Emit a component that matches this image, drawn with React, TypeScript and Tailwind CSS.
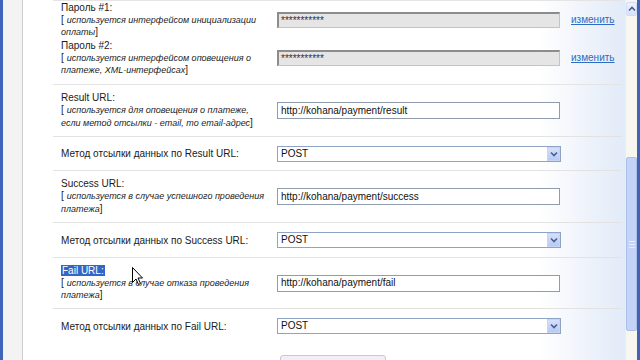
import React from "react";

const Hint = ({ lines }: { lines: string[] }) => (
  <div className="text-[9px] leading-[12.5px] text-[#1c1c1c]">
    {lines.map((l, i) => (
      <div key={i} className="whitespace-nowrap">
        {i === 0 && <span className="not-italic mr-[3px] text-[10px]">[</span>}
        <span className="italic">{l}</span>
        {i === lines.length - 1 && <span className="not-italic text-[10px]">]</span>}
      </div>
    ))}
  </div>
);

const PwInput = () => (
  <div className="w-[283px] h-[16px] bg-[#e5e5e5] border border-[#c4c4c4] border-t-2 border-l-2 border-t-[#8c8c8c] border-l-[#8c8c8c] flex items-center pl-[2px] text-[10px] leading-none text-[#333]">
    ***********
  </div>
);

const UrlInput = ({ value }: { value: string }) => (
  <div className="w-[283px] h-[17px] bg-white border border-[#8e9cae] flex items-center pl-[3px] text-[10px] text-[#111] leading-none">
    {value}
  </div>
);

const Select = () => (
  <div className="w-[284px] h-[16px] bg-white border border-[#8fa4c4] flex items-center justify-between pl-[3px] text-[10px] text-[#111] leading-none">
    <span>POST</span>
    <div className="w-[13px] h-[14px] bg-[linear-gradient(180deg,#d4e0fc,#b8cbf5)] border border-[#c7d5f5] flex items-center justify-center">
      <svg width="8" height="6" viewBox="0 0 8 6">
        <path d="M1 1.5 L4 4.5 L7 1.5" fill="none" stroke="#4a5f8c" strokeWidth="1.6" />
      </svg>
    </div>
  </div>
);

const Link = () => (
  <a className="ml-[11px] text-[10px] text-[#2d6cc3] underline leading-none">изменить</a>
);

export default function App() {
  return (
    <div className="w-[640px] h-[360px] overflow-hidden flex bg-white relative font-['Liberation_Sans',Arial,sans-serif] text-[10px] text-[#1a1a1a]">
      <div className="w-[3px] shrink-0 bg-[#3f63b6]" />
      <div className="w-[20px] shrink-0 bg-[#f3f3f3] border-r border-[#cdcdcd]" />
      <div className="flex-1 flex bg-[linear-gradient(90deg,#ffffff_0%,#ffffff_84%,#dde7f6_100%)]">
        <div className="flex-1 pl-[30px] pr-[3px] flex flex-col">
          {/* password group */}
          <div className="shrink-0 border-t border-[#e4e4e4] border-b h-[85px] flex flex-col">
            <div className="h-[38px] shrink-0 flex items-center">
              <div className="w-[224px] pl-[8px]">
                <div className="leading-[12px]">Пароль #1:</div>
                <Hint lines={["используется интерфейсом инициализации", "оплаты"]} />
              </div>
              <PwInput />
              <Link />
            </div>
            <div className="h-[38px] shrink-0 flex items-center">
              <div className="w-[224px] pl-[8px]">
                <div className="leading-[12px]">Пароль #2:</div>
                <Hint lines={["используется интерфейсом оповещения о", "платеже, XML-интерфейсах"]} />
              </div>
              <PwInput />
              <Link />
            </div>
          </div>

          <div className="shrink-0 h-[52px] border-b border-[#e2e2e2] flex items-center">
            <div className="w-[224px] pl-[8px]">
              <div className="leading-[12px]">Result URL:</div>
              <Hint lines={["используется для оповещения о платеже,", "если метод отсылки - email, то email-адрес"]} />
            </div>
            <UrlInput value="http://kohana/payment/result" />
          </div>

          <div className="shrink-0 h-[34px] border-b border-[#e2e2e2] flex items-center">
            <div className="w-[224px] pl-[8px] whitespace-nowrap">Метод отсылки данных по Result URL:</div>
            <Select />
          </div>

          <div className="shrink-0 h-[52px] border-b border-[#e2e2e2] flex items-center">
            <div className="w-[224px] pl-[8px]">
              <div className="leading-[12px]">Success URL:</div>
              <Hint lines={["используется в случае успешного проведения", "платежа"]} />
            </div>
            <UrlInput value="http://kohana/payment/success" />
          </div>

          <div className="shrink-0 h-[35px] border-b border-[#e2e2e2] flex items-center">
            <div className="w-[224px] pl-[8px] whitespace-nowrap">Метод отсылки данных по Success URL:</div>
            <Select />
          </div>

          <div className="shrink-0 h-[51px] border-b border-[#e2e2e2] flex items-center">
            <div className="w-[224px] pl-[8px]">
              <div className="leading-[12px]">
                <span className="bg-[#3366c6] text-white px-[1px]">Fail URL:</span>
              </div>
              <Hint lines={["используется в случае отказа проведения", "платежа"]} />
            </div>
            <UrlInput value="http://kohana/payment/fail" />
          </div>

          <div className="shrink-0 h-[34px] flex items-center">
            <div className="w-[224px] pl-[8px] whitespace-nowrap">Метод отсылки данных по Fail URL:</div>
            <Select />
          </div>

          <div className="shrink-0 pt-[12px] pl-[227px]">
            <div className="w-[106px] h-[22px] rounded-[3px] border border-[#cbc6da] bg-[#f0eef6]" />
          </div>
        </div>

        {/* scrollbar */}
        <div className="w-[12px] shrink-0 flex flex-col bg-[#f7f6f1] border-l border-[#eeede6]">
          <div className="shrink-0 h-[14px] mt-[2px] bg-[linear-gradient(180deg,#eef3fd,#d6e2fb)] border border-[#d2dcf2] rounded-[2px] flex items-center justify-center">
            <svg width="8" height="6" viewBox="0 0 8 6">
              <path d="M1 4.5 L4 1.5 L7 4.5" fill="none" stroke="#4a5f8c" strokeWidth="1.6" />
            </svg>
          </div>
          <div className="shrink-0 h-[141px]" />
          <div className="shrink-0 h-[174px] bg-[#c4d3f8] border border-[#aebfe9] rounded-[2px] flex items-center justify-center">
            <div className="flex flex-col gap-[2px]">
              <div className="w-[6px] h-[1px] bg-[#e6edfd]" />
              <div className="w-[6px] h-[1px] bg-[#e6edfd]" />
              <div className="w-[6px] h-[1px] bg-[#e6edfd]" />
            </div>
          </div>
          <div className="flex-1" />
        </div>
      </div>
      <div className="w-[3px] shrink-0 bg-[#3f63b6]" />

      {/* mouse cursor */}
      <svg className="absolute left-[132px] top-[267px]" width="12" height="19" viewBox="0 0 12 19">
        <path d="M0.5 0.5 L0.5 15.5 L4 12 L6.5 17.5 L8.5 16.5 L6 11 L10.5 11 Z" fill="#ffffff" stroke="#000000" strokeWidth="1" />
      </svg>
    </div>
  );
}
